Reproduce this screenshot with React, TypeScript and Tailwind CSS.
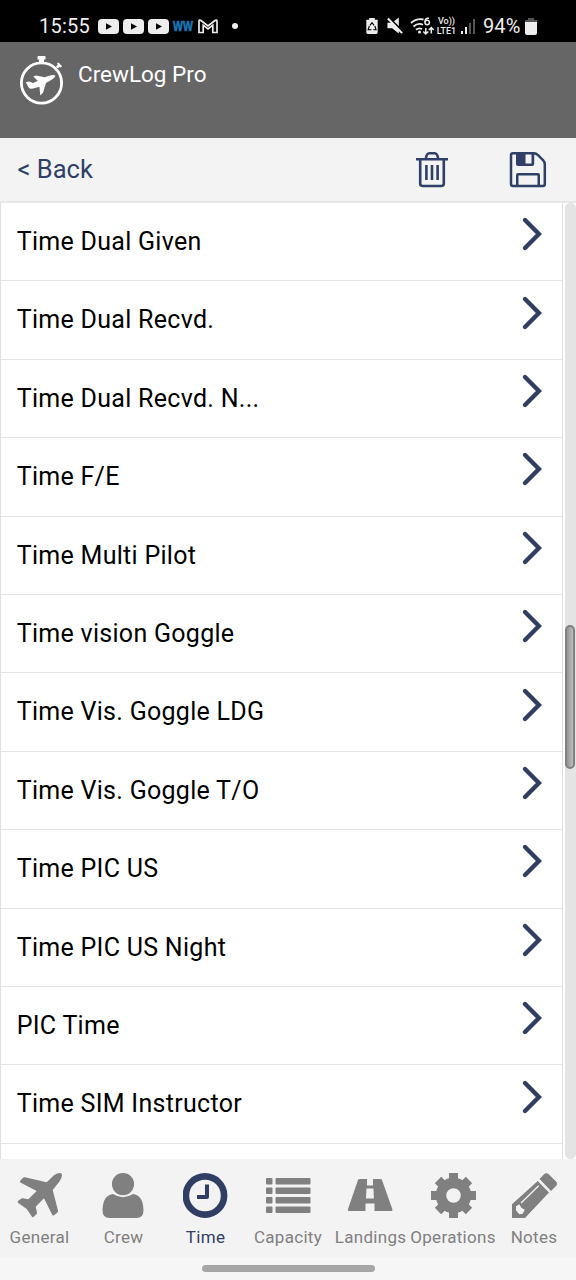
import type { ReactNode } from "react";

function Icon({ box, className, children }: { box: string; className: string; children: ReactNode }) {
  return (
    <svg viewBox={box} className={`block shrink-0 ${className}`} fill="currentColor">
      {children}
    </svg>
  );
}

const rows = [
  "Time Dual Given",
  "Time Dual Recvd.",
  "Time Dual Recvd. N...",
  "Time F/E",
  "Time Multi Pilot",
  "Time vision Goggle",
  "Time Vis. Goggle LDG",
  "Time Vis. Goggle T/O",
  "Time PIC US",
  "Time PIC US Night",
  "PIC Time",
  "Time SIM Instructor",
];

function YouTube() {
  return (
    <Icon box="0 0 21 15" className="h-[15px] w-[21px]">
      <rect width="21" height="15" rx="4" />
      <path d="M8 4.2L14 7.5L8 10.8Z" fill="#000" />
    </Icon>
  );
}

function StatusBar() {
  return (
    <div className="flex h-[42px] shrink-0 items-center bg-black pt-[10px] text-[#ededed]">
      <span className="ml-[39px] w-[59px] whitespace-nowrap text-[20px] tracking-[0.25px]">15:55</span>
      <div className="flex gap-1">
        <YouTube />
        <YouTube />
        <YouTube />
      </div>
      <span className="ml-[4px] w-[21px] origin-left scale-x-[0.7] whitespace-nowrap text-[15px] font-bold text-[#1778b5] [-webkit-text-stroke:0.7px_#1778b5] [font-family:'Liberation_Sans',sans-serif]">WW</span>
      <Icon box="0 0 20 15" className="ml-[4px] h-[15px] w-5">
        <path d="M1 13.5V2.2Q1.3 .5 3 1.5L10 7L17 1.5Q18.7 .5 19 2.2V13.5H14.8V6.2L10 10L5.2 6.2V13.5Z" fill="none" stroke="currentColor" strokeWidth="1.7" />
      </Icon>
      <span className="ml-[14px] size-[6px] rounded-full bg-[#ededed]" />
      <Icon box="366 16 12 19" className="ml-[128px] h-[18px] w-3">
        <path d="M369 17h6v2h3v13q0 2-2 2h-8q-2 0-2-2V19h3z" />
        <path d="M369.800 24.800l2.200-2.800l2.200 2.800M375 25.500l1.300 4h-3M371.500 29.500h-3.600l1.300-4" fill="none" stroke="#000" strokeWidth="1.2" />
      </Icon>
      <Icon box="386 16 18 19" className="ml-[8px] h-[18px] w-[18px]">
        <path d="M387 22h5l7-5.500v17l-7-5.500h-5z" />
        <path d="M388.500 16.500l15 15" stroke="#000" strokeWidth="2" />
        <path d="M387.500 17.500l15 15.500" stroke="currentColor" strokeWidth="2.2" />
      </Icon>
      <Icon box="410 15 24 21" className="ml-[6px] h-[21px] w-6">
        <g fill="none" stroke="currentColor" strokeWidth="1.8">
          <path d="M411 22q5.500-5 12.500-3.500M413.500 25.500q4.500-4 9.500-1.800M416 28.800q3-2.500 6-.7" />
          <path d="M429 17.300q-4-.8-4 4" strokeWidth="1.500" />
          <circle cx="427.200" cy="21.500" r="2.200" strokeWidth="1.500" />
          <path d="M425.800 27v6M423.300 30.500l2.500 2.500l2.500-2.500M431.300 32.500v-6M428.800 29l2.500-2.500l2.500 2.500" strokeWidth="1.500" />
        </g>
        <circle cx="419.500" cy="31" r="1.5" />
      </Icon>
      <div className="ml-[1px] flex w-[23px] flex-col items-center whitespace-nowrap text-[9px] font-medium leading-[10px]">
        <span>Vo))</span>
        <span>LTE1</span>
      </div>
      <Icon box="461 17 16 17" className="ml-[2px] h-[17px] w-4">
        <path d="M462 30h2v3h-2zM466 26h2v7h-2z" />
        <path d="M470 22h2v11h-2zM474 18h2v15h-2z" fill="#555" />
      </Icon>
      <span className="ml-[7px] w-[39px] whitespace-nowrap text-[20px] tracking-[0.1px]">94%</span>
      <Icon box="0 0 12 17" className="ml-[3px] h-[17px] w-3">
        <path d="M3 0h6v2h3v4H0V2h3z" fill="#555" />
        <path d="M0 4h12v11q0 2-2 2H2q-2 0-2-2z" />
      </Icon>
    </div>
  );
}

function Header() {
  return (
    <header className="flex h-[96px] shrink-0 bg-[#666] text-white">
      <Icon box="18 54 47 52" className="ml-[18px] mt-3 h-[52px] w-[47px]">
        <circle cx="41.500" cy="83" r="20.100" fill="none" stroke="currentColor" strokeWidth="2.800" />
        <path d="M37.500 57q0-1 1-1h6q1 0 1 1v2.500h-1.500v3h-5v-3h-1.500zM56 66.500l1.800-1.800l-1-1l1.700-1.200l3.500 3.500l-1.200 1.700l-1.200-1l-1.800 1.800z" />
        <path d="M25.800 82.200l3-.7l4.500 1.500l4.500-2.300l-4.600-4.200l2.800-.9l8.500 1.700l5.500-1.800c3-.9 5-.6 5.200.2c.3 1.300-2.200 3.100-4 4.200l-5.200 3.200l-3 9.700l-2.700 2.700l-.9-8.800l-6.300 1.800q-3 1-4.500-1z" />
      </Icon>
      <h1 className="ml-[13px] mt-[17px] whitespace-nowrap text-[22.500px] leading-[31px]">CrewLog Pro</h1>
    </header>
  );
}

function Toolbar() {
  return (
    <div className="flex h-[65px] shrink-0 border-b-2 border-[#e7e7e7] bg-[#f3f3f3] text-[#2f3f67]">
      <button className="ml-[17.5px] mt-[15px] h-8 w-[89.5px] whitespace-nowrap text-left text-[25.500px] leading-[33px]">&lt; Back</button>
      <Icon box="415 150 34 38" className="ml-[308px] mt-[12px] h-[38px] w-[34px]">
        <g fill="none" stroke="currentColor" strokeWidth="2.6">
          <path d="M416 159.300H448M420.200 159.300V183.500q0 2.500 2.500 2.500h18.600q2.500 0 2.500-2.500V159.300M425.800 158.500q1-5.300 3.500-5.300h5.400q2.500 0 3.500 5.300" />
          <path d="M426.400 165v15M432 165v15M437.600 165v15" />
        </g>
      </Icon>
      <Icon box="509 150 38 38" className="ml-[60px] mt-[12px] size-[38px]">
        <path d="M513 153.200h21q2 0 4 2l5 5q1.800 2 1.800 4v19.800q0 2-2 2h-29.800q-2 0-2-2v-28.800q0-2 2-2z" fill="none" stroke="currentColor" strokeWidth="2.500" />
        <path d="M516 152h9.500v11.500h6v-10.500h2.700v11q0 2-2 2h-14.200q-2 0-2-2zM516 186v-11q0-2 2-2h20q2 0 2 2v11h-2.500v-10.500h-19V186z" />
      </Icon>
    </div>
  );
}

function List() {
  return (
    <main className="flex min-h-0 flex-1 overflow-hidden bg-white">
      <div className="flex w-[563px] flex-col border-x border-[#dfdfdf]">
        {rows.map((row) => (
          <div key={row} className="flex h-[78.4px] shrink-0 justify-between border-b border-[#e4e4e4]">
            <span className="ml-[15.7px] mt-[23px] whitespace-nowrap text-[25px] leading-8 tracking-[0.29px] text-black">{row}</span>
            <Icon box="0 0 24 36" className="mr-[17.5px] mt-[13.3px] h-9 w-6">
              <path d="M4 4L17.900 18L4 32" fill="none" stroke="#303e64" strokeWidth="4.400" strokeLinecap="round" />
            </Icon>
          </div>
        ))}
      </div>
      <div className="ml-[2px] w-[11px] rounded-[5px] bg-[#e4e4e4] pt-[422px]">
        <div className="h-[144px] w-[10px] rounded-full border-2 border-[#808080] bg-linear-to-r from-[#969696] to-[#bebebe]" />
      </div>
    </main>
  );
}

const tabs = [
  {
    label: "General",
    width: "w-[79px]",
    art: <path d="M3.300 9.500Q2.500 8.500 3.300 7.700L6 4.700Q6.700 4 8 4.300L29.700 9.300L37 2.300Q40 0 43 0Q45 0 45 2Q45 5 42.500 8.500L35.700 17L41 37.500Q41.300 39 40 40L37 42.300Q36 43 35.300 42L27 25.300L18.700 33.700L20 39.500Q20.200 40.500 19.300 41.300L16.500 44Q15.700 44.800 15 43.800L9.700 36L1.200 30Q0 29 1 28L4 25.700Q5 25 6 25.300L11.300 26.300L19.700 18Z" />,
  },
  {
    label: "Crew",
    width: "w-[89px]",
    art: <path d="M22 0a11 11 0 0 1 0 22.200a11 11 0 0 1 0-22.200M12 21q10 6.500 20 0q10 1 10.500 16q0 8-7 8H8.500q-7 0-7-8q.5-15 10.500-16z" />,
  },
  {
    label: "Time",
    width: "w-[75px]",
    art: (
      <g fill="none" stroke="currentColor">
        <circle cx="22" cy="22.500" r="19.100" strokeWidth="6.600" />
        <path d="M24 11.500V24H14" strokeWidth="4" strokeLinejoin="round" />
      </g>
    ),
  },
  {
    label: "Capacity",
    width: "w-[90px]",
    art: [5, 14.5, 24, 33.500].map((y) => (
      <g key={y}>
        <rect y={y} width="6.500" height="6.500" rx="1" />
        <rect x="9.500" y={y} width="35" height="6.500" rx="1" />
      </g>
    )),
  },
  {
    label: "Landings",
    width: "w-[75px]",
    art: <path fillRule="evenodd" d="M11.500 6h7.500V12.500h6V6H32.500q1 0 1.500 1L44.300 36q.5 2-1 2H26.500V30.500h-9V38H1q-1.500 0-1-2L10 7q.5-1 1.500-1zM18.500 15.500L18 25.500h7.900L25.400 15.500z" />,
  },
  {
    label: "Operations",
    width: "w-[90px]",
    art: (
      <g fill="none" stroke="currentColor">
        <circle cx="22.500" cy="22.500" r="12.500" strokeWidth="10.500" />
        <path
          d="M22.500 0v7M22.500 45v-7M0 22.500h7M45 22.500h-7M7 7l6 6M38 7l-6 6M7 38l6-6M38 38l-6-6"
          strokeWidth="9"
        />
      </g>
    ),
  },
  {
    label: "Notes",
    width: "w-[72px]",
    art: (
      <>
        <path d="M0 45V31.300L25.700 8L37 19.500L13 45zM27.500 6L32 1.300Q34 -.7 36.500 1L44 8.500Q46 10.700 44 13L39 18z" />
        <path d="M9 30L26.700 12.700" stroke="#f3f3f3" strokeWidth="1.300" />
        <path d="M4 33.300l3.300-2l2 3.400l3.400 2l-2 4l-3.400.6l-3.300-4z" fill="#f3f3f3" />
      </>
    ),
  },
];

function TabBar() {
  return (
    <nav className="flex h-[121px] shrink-0 flex-col bg-[#f3f3f3] text-[#808080]">
      <div className="flex h-[98px] pt-[14px]">
        {tabs.map(({ label, width, art }) => (
          <div key={label} className={`flex shrink-0 flex-col items-center ${width} ${label === "Time" ? "text-[#303e64]" : ""}`}>
            <Icon box="0 0 45 45" className="size-[45px]">{art}</Icon>
            <span className="mt-[7px] whitespace-nowrap text-[17px] leading-6 tracking-[0.3px]">{label}</span>
          </div>
        ))}
      </div>
      <div className="flex h-[23px] justify-center bg-[#f6f6f6] pt-[8px]">
        <div className="h-[7px] w-[173px] rounded-full bg-[#a6a6a6]" />
      </div>
    </nav>
  );
}

export default function App() {
  return (
    <div className="flex h-[1280px] w-[576px] flex-col overflow-hidden bg-white [font-family:Roboto,sans-serif]">
      <StatusBar />
      <Header />
      <Toolbar />
      <List />
      <TabBar />
    </div>
  );
}
